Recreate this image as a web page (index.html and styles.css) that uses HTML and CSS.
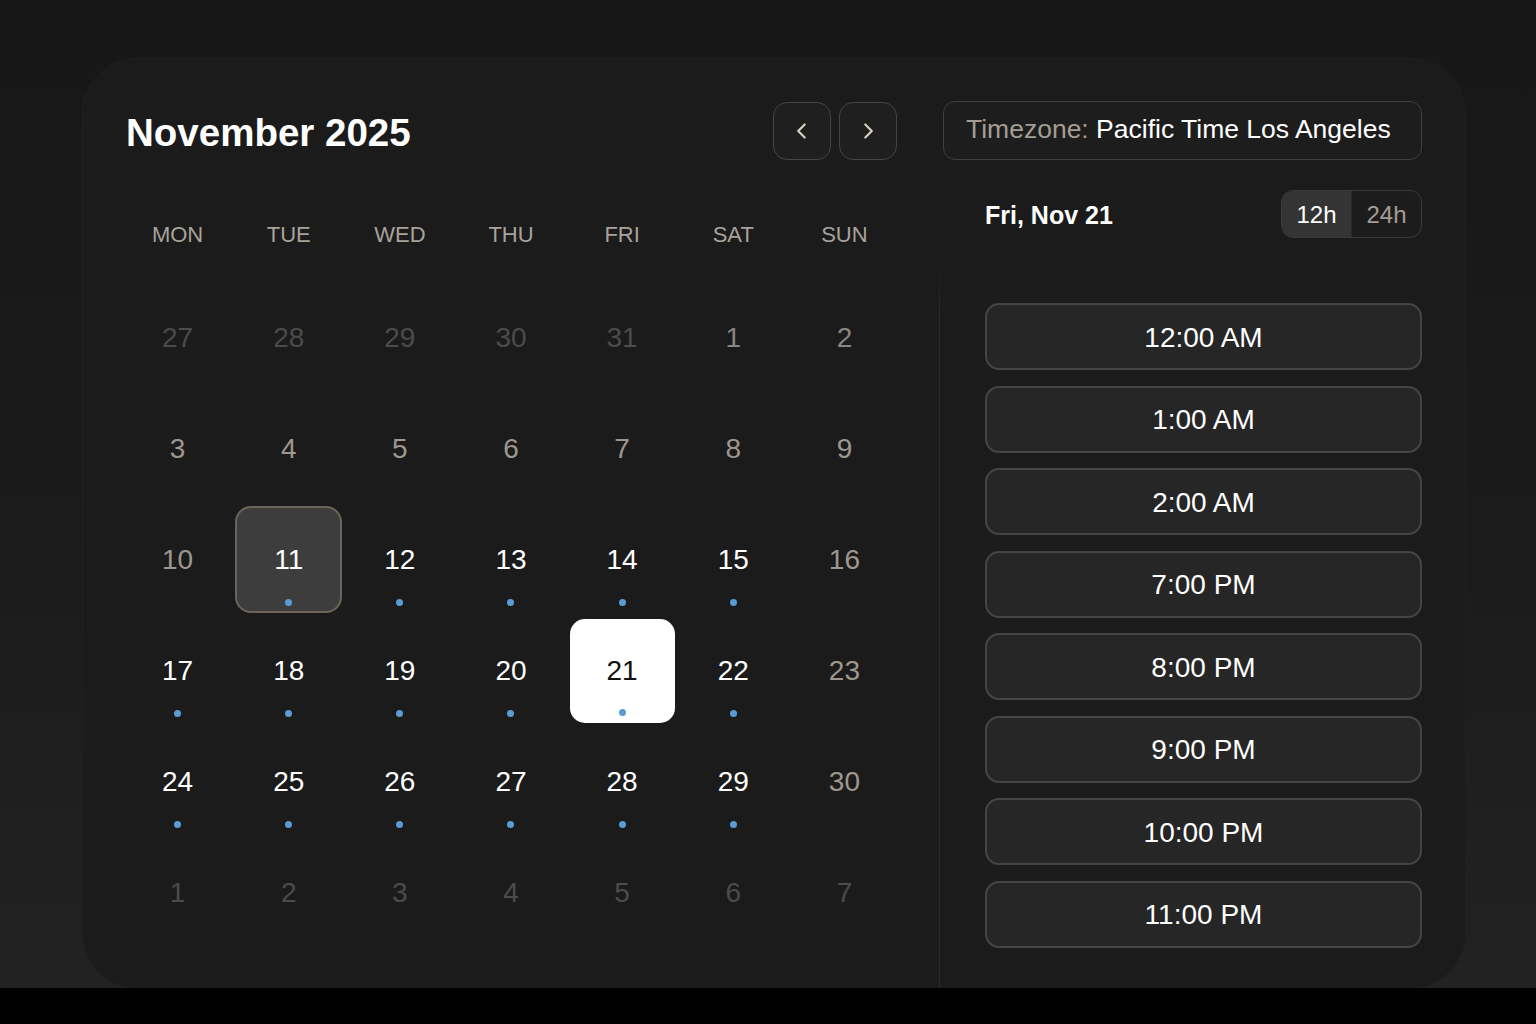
FILE: index.html
```html
<!DOCTYPE html>
<html lang="en">
<head>
<meta charset="utf-8">
<title>Booking calendar</title>
<link rel="stylesheet" href="styles.css">
</head>
<body>
<div class="page">
  <section class="card">
    <header class="card-head">
      <h1 class="month-title">November 2025</h1>
      <div class="head-tools">
        <div class="nav-group">
          <button class="nav-btn" aria-label="Previous month">
            <svg viewBox="0 0 24 24" width="26" height="26"><path d="M14.5 6 L8.5 12 L14.5 18" fill="none" stroke="#d9d0c4" stroke-width="2" stroke-linecap="round" stroke-linejoin="round"/></svg>
          </button>
          <button class="nav-btn" aria-label="Next month">
            <svg viewBox="0 0 24 24" width="26" height="26"><path d="M9.5 6 L15.5 12 L9.5 18" fill="none" stroke="#d9d0c4" stroke-width="2" stroke-linecap="round" stroke-linejoin="round"/></svg>
          </button>
        </div>
        <div class="tz-box"><p class="tz-text"><span class="tz-label">Timezone:</span> <span class="tz-value">Pacific Time Los Angeles</span></p></div>
      </div>
    </header>

    <div class="card-body">
      <div class="cal">
        <div class="weekdays">
          <span>MON</span><span>TUE</span><span>WED</span><span>THU</span><span>FRI</span><span>SAT</span><span>SUN</span>
        </div>
        <div class="days">
          <div class="cell"><div class="day outside">27</div></div>
          <div class="cell"><div class="day outside">28</div></div>
          <div class="cell"><div class="day outside">29</div></div>
          <div class="cell"><div class="day outside">30</div></div>
          <div class="cell"><div class="day outside">31</div></div>
          <div class="cell"><div class="day muted early">1</div></div>
          <div class="cell"><div class="day muted early">2</div></div>

          <div class="cell"><div class="day muted">3</div></div>
          <div class="cell"><div class="day muted">4</div></div>
          <div class="cell"><div class="day muted">5</div></div>
          <div class="cell"><div class="day muted">6</div></div>
          <div class="cell"><div class="day muted">7</div></div>
          <div class="cell"><div class="day muted">8</div></div>
          <div class="cell"><div class="day muted">9</div></div>

          <div class="cell"><div class="day muted">10</div></div>
          <div class="cell"><div class="day avail today">11<i class="dot"></i></div></div>
          <div class="cell"><div class="day avail">12<i class="dot"></i></div></div>
          <div class="cell"><div class="day avail">13<i class="dot"></i></div></div>
          <div class="cell"><div class="day avail">14<i class="dot"></i></div></div>
          <div class="cell"><div class="day avail">15<i class="dot"></i></div></div>
          <div class="cell"><div class="day muted">16</div></div>

          <div class="cell"><div class="day avail">17<i class="dot"></i></div></div>
          <div class="cell"><div class="day avail">18<i class="dot"></i></div></div>
          <div class="cell"><div class="day avail">19<i class="dot"></i></div></div>
          <div class="cell"><div class="day avail">20<i class="dot"></i></div></div>
          <div class="cell"><div class="day avail selected">21<i class="dot"></i></div></div>
          <div class="cell"><div class="day avail">22<i class="dot"></i></div></div>
          <div class="cell"><div class="day muted">23</div></div>

          <div class="cell"><div class="day avail">24<i class="dot"></i></div></div>
          <div class="cell"><div class="day avail">25<i class="dot"></i></div></div>
          <div class="cell"><div class="day avail">26<i class="dot"></i></div></div>
          <div class="cell"><div class="day avail">27<i class="dot"></i></div></div>
          <div class="cell"><div class="day avail">28<i class="dot"></i></div></div>
          <div class="cell"><div class="day avail">29<i class="dot"></i></div></div>
          <div class="cell"><div class="day muted">30</div></div>

          <div class="cell"><div class="day outside">1</div></div>
          <div class="cell"><div class="day outside">2</div></div>
          <div class="cell"><div class="day outside">3</div></div>
          <div class="cell"><div class="day outside">4</div></div>
          <div class="cell"><div class="day outside">5</div></div>
          <div class="cell"><div class="day outside">6</div></div>
          <div class="cell"><div class="day outside">7</div></div>
        </div>
      </div>

      <aside class="slots-panel">
        <div class="slots-head">
          <h2 class="sel-date">Fri, Nov 21</h2>
          <div class="fmt-toggle">
            <span class="fmt active">12h</span><span class="fmt">24h</span>
          </div>
        </div>
        <div class="slot-list">
          <button class="slot">12:00 AM</button>
          <button class="slot">1:00 AM</button>
          <button class="slot">2:00 AM</button>
          <button class="slot">7:00 PM</button>
          <button class="slot">8:00 PM</button>
          <button class="slot">9:00 PM</button>
          <button class="slot">10:00 PM</button>
          <button class="slot">11:00 PM</button>
        </div>
      </aside>
    </div>
  </section>
</div>
</body>
</html>
```

FILE: styles.css
```css
* { box-sizing: border-box; }

html, body {
  margin: 0;
  padding: 0;
  background: #000;
  font-family: "Liberation Sans", Arial, sans-serif;
  color: #fff;
}

.page {
  height: 988px;
  padding: 59px 0 0 83px;
  background: linear-gradient(180deg, #171717 0%, #1b1b1b 55%, #222222 100%);
  overflow: hidden;
}

.card {
  width: 1382px;
  height: 929px;
  border-radius: 55px;
  background: #1b1b1b;
  box-shadow: 0 0 0 1px #202020;
  padding: 42px 43px 0 43px;
  display: flex;
  flex-direction: column;
}

/* header */
.card-head {
  display: flex;
  align-items: center;
  justify-content: space-between;
  height: 59px;
}

.month-title {
  margin: 0;
  padding-top: 5px;
  font-size: 38.5px;
  font-weight: 700;
  color: #fff;
}

.head-tools {
  display: flex;
  align-items: center;
  gap: 46px;
}

.nav-group {
  display: flex;
  gap: 8px;
}

.nav-btn {
  width: 58px;
  height: 58px;
  border-radius: 14px;
  border: 1.5px solid #454545;
  background: #1f1f1f;
  padding: 0;
  display: flex;
  align-items: center;
  justify-content: center;
  cursor: pointer;
}

.tz-box {
  width: 479px;
  height: 59px;
  border: 1.5px solid #3f3f3f;
  border-radius: 12px;
  background: #1d1d1d;
  padding: 0 0 3px 22px;
  display: flex;
  align-items: center;
}

.tz-text {
  margin: 0;
  font-size: 26.5px;
  white-space: nowrap;
}

.tz-label { color: #a39d95; }
.tz-value { color: #fff; }

/* body */
.card-body {
  flex: 1;
  display: flex;
  margin-top: 20px;
}

.cal {
  flex: 0 0 813px;
  padding-top: 31px;
}

.weekdays {
  width: 778px;
  margin-left: -4px;
  display: grid;
  grid-template-columns: repeat(7, 1fr);
  height: 48px;
  align-items: center;
  text-align: center;
  font-size: 22px;
  color: #a8a29a;
}

.days {
  width: 778px;
  margin-left: -4px;
  margin-top: 23px;
  display: grid;
  grid-template-columns: repeat(7, 1fr);
  grid-auto-rows: 111px;
}

.cell {
  display: flex;
  align-items: center;
  justify-content: center;
}

.day {
  position: relative;
  width: 107px;
  height: 107px;
  border-radius: 16px;
  display: flex;
  align-items: center;
  justify-content: center;
  font-size: 28px;
  padding-top: 1px;
}

.day.outside { color: #4b4b4b; }
.day.muted { color: #9d978f; }
.day.muted.early { color: #8a8580; }
.day.avail { color: #fff; }

.day.today {
  background: #3d3d3d;
  border: 2px solid #6b645b;
}

.day.selected {
  width: 105px;
  height: 104px;
  background: #fff;
  color: #111;
  border-radius: 15px;
}

.dot {
  position: absolute;
  left: 50%;
  bottom: 7px;
  width: 7px;
  height: 7px;
  margin-left: -3.5px;
  border-radius: 50%;
  background: #5b9bd5;
}

.day.today .dot { bottom: 5px; }
.day.selected .dot { bottom: 7px; }

/* right panel */
.slots-panel {
  flex: 1;
  border-left: 1px solid #2b2b2b;
  border-image: linear-gradient(180deg, rgba(43,43,43,0) 0px, rgba(43,43,43,0) 80px, #2b2b2b 140px, #2b2b2b 100%) 1;
  padding: 10px 0 0 45px;
}

.slots-head {
  display: flex;
  align-items: center;
  justify-content: space-between;
  height: 48px;
}

.sel-date {
  margin: 0;
  padding-top: 2px;
  font-size: 25px;
  font-weight: 700;
  color: #fff;
}

.fmt-toggle {
  display: flex;
  width: 141px;
  height: 48px;
  border: 1.5px solid #3a3a3a;
  border-radius: 12px;
  overflow: hidden;
  background: #1c1c1c;
}

.fmt {
  flex: 1;
  display: flex;
  align-items: center;
  justify-content: center;
  font-size: 24px;
  padding-top: 1px;
  color: #a39d95;
}

.fmt.active {
  background: #343434;
  color: #fff;
  border-right: 1px solid #2a2a2a;
}

.slot-list {
  margin-top: 65px;
  display: flex;
  flex-direction: column;
  gap: 15.5px;
}

.slot {
  height: 67px;
  width: 437px;
  border-radius: 14px;
  border: 2px solid #454545;
  background: #262626;
  color: #fff;
  font-family: "Liberation Sans", Arial, sans-serif;
  font-size: 28px;
  padding: 2px 0 0;
  cursor: pointer;
}
```
